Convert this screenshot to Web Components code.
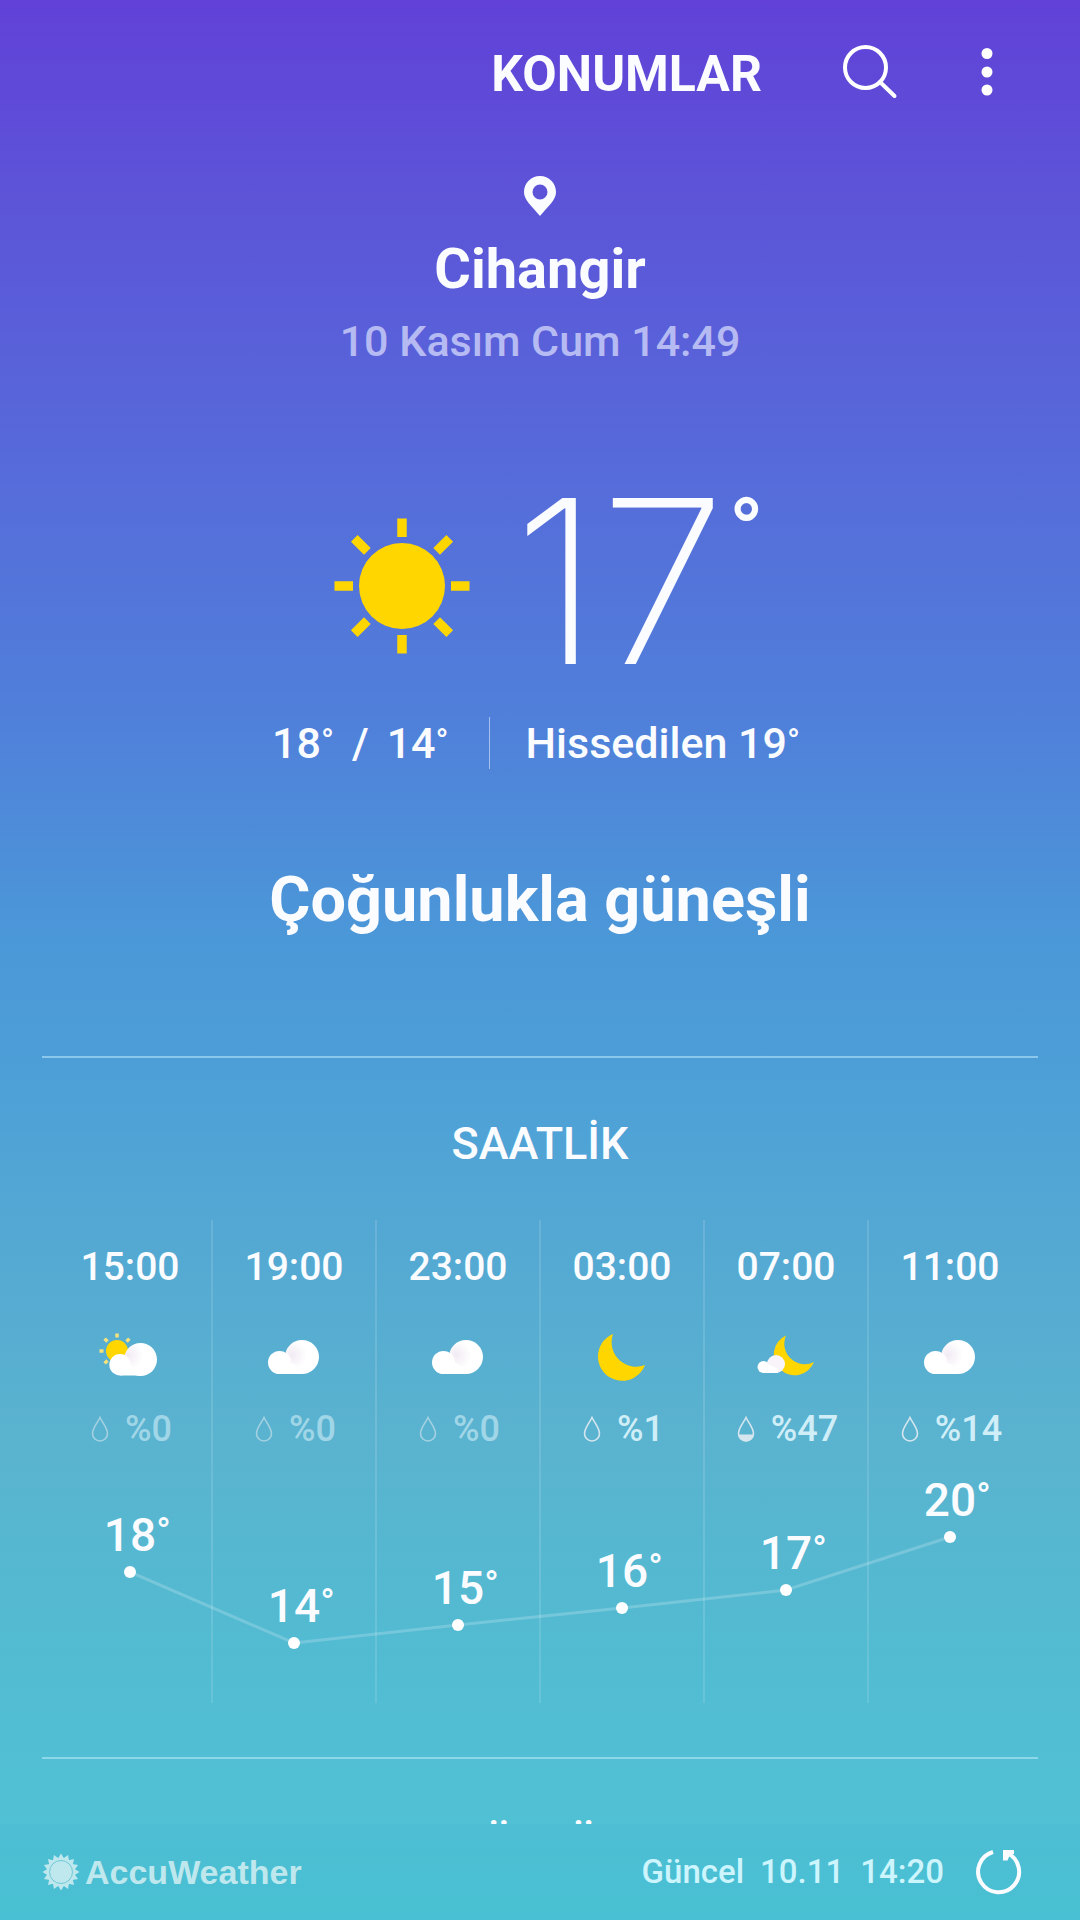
<!DOCTYPE html>
<html lang="tr">
<head>
<meta charset="utf-8">
<meta name="viewport" content="width=device-width, initial-scale=1">
<title>Hava Durumu</title>
<style>
  body {
    margin: 0;
    font-family: Roboto, "Noto Sans", sans-serif;
    font-weight: 500;
    color: #fafcff;
  }
</style>
</head>
<body>
<weather-app>
  <weather-header slot="header"></weather-header>
  <current-weather
    city="Cihangir"
    date="10 Kasım Cum 14:49"
    temp="17"
    high="18"
    low="14"
    feels="19"
    condition="Çoğunlukla güneşli"></current-weather>
  <forecast-section heading="SAATLİK">
    <hourly-forecast>
      <hour-item time="15:00" icon="partly" rain="0" temp="18"></hour-item>
      <hour-item time="19:00" icon="cloud" rain="0" temp="14"></hour-item>
      <hour-item time="23:00" icon="cloud" rain="0" temp="15"></hour-item>
      <hour-item time="03:00" icon="moon" rain="1" temp="16"></hour-item>
      <hour-item time="07:00" icon="moon-cloud" rain="47" temp="17"></hour-item>
      <hour-item time="11:00" icon="cloud" rain="14" temp="20"></hour-item>
    </hourly-forecast>
  </forecast-section>
  <forecast-section heading="GÜNLÜK"></forecast-section>
  <weather-footer slot="footer" date="10.11" time="14:20"></weather-footer>
</weather-app>

<script>
const MAX_TEMP = 20;
const DOT_TOP = 87;

// vertical distance of a temperature from the top of the chart
const drop = (temp) => Math.round(((MAX_TEMP - temp) * 53) / 3);

const rays = (count, x, inner, outer) =>
  Array.from({ length: count }, (_, i) =>
    `<path d="M${x} ${inner}V${outer}" transform="rotate(${(i * 360) / count})" />`
  ).join("");

const cloudFill = `
  <defs>
    <radialGradient id="shade" gradientUnits="userSpaceOnUse" cx="30" cy="30" r="15">
      <stop offset="0" stop-color="#f1ebf4" />
      <stop offset="1" stop-color="#fff" />
    </radialGradient>
  </defs>`;

const ICONS = {
  cloud: `${cloudFill}
    <circle cx="40" cy="32" r="17" fill="url(#shade)" />
    <path fill="#fff" d="M17.500 38H30L40 44V49H17.500z" />
    <circle cx="17.500" cy="37.500" r="11.500" fill="#fff" />`,
  partly: `${cloudFill}
    <g transform="translate(19 26)" stroke="#f5e27a" stroke-width="3.500">${rays(8, 0, -13.5, -17.5)}</g>
    <circle cx="19" cy="26" r="11" fill="#ffd600" />
    <circle cx="42.500" cy="34.500" r="16.500" fill="url(#shade)" />
    <path fill="#fff" d="M22 40H32L43 46V50.500H22z" />
    <circle cx="22" cy="39.800" r="10.700" fill="#fff" />`,
  moon: `<path fill="#ffd600" d="M23 9A24.300 24.300 0 1 0 55 40A24.500 24.500 0 0 1 23 9z" />`,
  "moon-cloud": `
    <path fill="#ffd600" d="M32 10.500A20.800 20.800 0 1 0 60 37A20.500 20.500 0 0 1 32 10.500z" />
    <circle cx="22" cy="39" r="9" fill="#f8f4fa" />
    <path fill="#fff" d="M9 40H16L24 44V48H9z" />
    <circle cx="9.500" cy="42" r="6" fill="#fff" />`,
};

// raised degree sign, smaller than the digits beside it
const degree = `<span class="degree">°</span>`;

class WeatherApp extends HTMLElement {
  constructor() {
    super();
    const shadow = this.attachShadow({ mode: "open" });

    shadow.innerHTML = `
      <style>
        :host {
          display: flex;
          flex-direction: column;
          height: 100vh;
          background: linear-gradient(
            #6141d8 0%,
            #5c55d8 11%,
            #566cda 25%,
            #507fda 37%,
            #4b98d8 49%,
            #4d9fd7 56%,
            #52a6d4 62%,
            #5ab3cf 75%,
            #52bbd2 86%,
            #51c0d4 94%,
            #4cc3d4 100%
          );
        }

        main {
          flex: 1;
          min-height: 0;
          overflow: hidden;
          padding: 0 42px;
        }
      </style>

      <slot name="header"></slot>
      <main><slot></slot></main>
      <slot name="footer"></slot>
    `;
  }
}

class WeatherHeader extends HTMLElement {
  constructor() {
    super();
    const shadow = this.attachShadow({ mode: "open" });

    shadow.innerHTML = `
      <style>
        :host {
          display: block;
        }

        header {
          display: flex;
          align-items: flex-start;
          justify-content: flex-end;
          padding: 44px 65px 40px 42px;
        }

        button {
          display: flex;
          padding: 0;
          border: none;
          background: none;
          color: inherit;
          font: 700 50px/60px Roboto, sans-serif;
          cursor: pointer;
        }

        .search {
          margin: 0 61px 0 80px;
        }

        svg {
          display: block;
        }
      </style>

      <header>
        <button type="button">KONUMLAR</button>
        <button type="button" class="search" aria-label="Ara">
          <svg width="56" height="56" viewBox="0 0 56 56" fill="none" stroke="#fff" stroke-width="4" stroke-linecap="round">
            <circle cx="23.500" cy="23.500" r="20.500" />
            <path d="M38 38L52.500 52" />
          </svg>
        </button>
        <button type="button" aria-label="Diğer seçenekler">
          <svg width="56" height="56" viewBox="0 0 56 56" fill="#fff">
            <circle cx="28" cy="9.500" r="5.500" />
            <circle cx="28" cy="28" r="5.500" />
            <circle cx="28" cy="46" r="5.500" />
          </svg>
        </button>
      </header>
    `;
  }
}

class CurrentWeather extends HTMLElement {
  constructor() {
    super();
    const shadow = this.attachShadow({ mode: "open" });
    const get = (name) => this.getAttribute(name) || "";

    shadow.innerHTML = `
      <style>
        :host {
          display: flex;
          flex-direction: column;
          align-items: center;
          padding: 32px 0 120px;
        }

        svg {
          display: block;
        }

        h1, h2, p {
          margin: 0;
        }

        h1 {
          margin-top: 21px;
          font-size: 56px;
          line-height: 64px;
          font-weight: 700;
        }

        .date {
          margin-top: 14px;
          font-size: 43px;
          line-height: 52px;
          color: rgba(225, 228, 255, 0.7);
        }

        .now {
          display: flex;
          align-items: center;
          gap: 43px;
          margin-top: 135px;
          padding-left: 18px;
        }

        .temp {
          display: flex;
          align-items: flex-start;
          gap: 3px;
          padding-bottom: 10px;
          font-family: Inter, Roboto, sans-serif;
          font-size: 228px;
          line-height: 158px;
          font-weight: 200;
        }

        .temp .degree {
          font-family: Roboto, sans-serif;
          font-size: 92px;
          line-height: 62px;
          font-weight: 500;
        }

        .details {
          display: flex;
          margin-top: 47px;
          font-size: 43px;
          line-height: 52px;
        }

        .details .degree {
          font-size: 34px;
          line-height: 34px;
          vertical-align: 6px;
        }

        .range {
          display: flex;
          gap: 18px;
          padding-right: 40px;
          border-right: 1px solid rgba(255, 255, 255, 0.5);
        }

        .feels {
          padding: 0 8px 0 36px;
        }

        h2 {
          margin-top: 95px;
          font-size: 63px;
          line-height: 72px;
          font-weight: 700;
        }
      </style>

      <svg width="32" height="40" viewBox="0 0 32 40" fill="#fafcff" aria-hidden="true">
        <path fill-rule="evenodd" d="M16 0C7 0 0 7 0 16c0 8 7 13 16 24 9-11 16-16 16-24C32 7 25 0 16 0zm0 8.500a7.500 7.500 0 1 1 0 15 7.500 7.500 0 0 1 0-15z" />
      </svg>
      <h1>${get("city")}</h1>
      <p class="date">${get("date")}</p>
      <div class="now">
        <svg width="136" height="136" viewBox="-68 -68 136 136" aria-hidden="true">
          <circle r="43" fill="#ffd600" />
          <g stroke="#ffd600" stroke-width="9.500">${rays(8, 0, -49, -67.5)}</g>
        </svg>
        <div class="temp">${get("temp")}${degree}</div>
      </div>
      <div class="details">
        <div class="range"><span>${get("high")}${degree}</span><span>/</span><span>${get("low")}${degree}</span></div>
        <div class="feels">Hissedilen ${get("feels")}${degree}</div>
      </div>
      <h2>${get("condition")}</h2>
    `;
  }
}

class ForecastSection extends HTMLElement {
  constructor() {
    super();
    const shadow = this.attachShadow({ mode: "open" });

    shadow.innerHTML = `
      <style>
        :host {
          display: block;
          padding: 60px 0 54px;
          border-top: 2px solid rgba(200, 240, 255, 0.5);
        }

        h3 {
          margin: 0 0 50px;
          font-size: 45px;
          line-height: 52px;
          font-weight: 500;
          text-align: center;
        }
      </style>

      <h3>${this.getAttribute("heading") || ""}</h3>
      <slot></slot>
    `;
  }
}

class HourlyForecast extends HTMLElement {
  constructor() {
    super();
    const shadow = this.attachShadow({ mode: "open" });
    const temps = [...this.querySelectorAll("hour-item")].map((item) => Number(item.getAttribute("temp")));
    const points = temps.map((temp, i) => `${i * 2 + 1},${DOT_TOP + drop(temp)}`).join(" ");

    shadow.innerHTML = `
      <style>
        :host {
          display: grid;
          grid-template-columns: repeat(6, 1fr);
          position: relative;
          padding: 0 5px 0 7px;
        }

        /* the line runs behind the points of all the columns */
        svg {
          position: absolute;
          left: 6px;
          bottom: 0;
          width: calc(100% - 12px);
          height: 253px;
        }
      </style>

      <svg viewBox="0 0 ${temps.length * 2} 253" preserveAspectRatio="none" aria-hidden="true">
        <polyline points="${points}" fill="none" stroke="#fff" stroke-opacity="0.2" stroke-width="3" vector-effect="non-scaling-stroke" />
      </svg>
      <slot></slot>
    `;
  }
}

class HourItem extends HTMLElement {
  constructor() {
    super();
    const shadow = this.attachShadow({ mode: "open" });
    const rain = Number(this.getAttribute("rain"));
    const temp = Number(this.getAttribute("temp"));

    shadow.innerHTML = `
      <style>
        :host {
          display: flex;
          flex-direction: column;
          align-items: center;
          position: relative;
          padding-top: 23px;
          box-sizing: border-box;
          border-right: 2px solid rgba(255, 255, 255, 0.13);
        }

        :host(:last-of-type) {
          border-right-color: transparent;
        }

        svg {
          display: block;
        }

        time {
          font-size: 39px;
          line-height: 48px;
        }

        .icon {
          margin: 34px 0 19px;
        }

        .rain {
          display: flex;
          align-items: center;
          gap: 16px;
          padding-left: 3px;
          font-size: 36px;
          line-height: 42px;
          color: #cfeef8;
        }

        .rain.dry {
          opacity: 0.6;
        }

        .chart {
          display: flex;
          flex-direction: column;
          align-items: center;
          height: 253px;
          padding-top: ${24 + drop(temp)}px;
          box-sizing: border-box;
        }

        .temp {
          position: relative;
          font-size: 46px;
          line-height: 52px;
        }

        /* the degree sign hangs outside, so the digits stay centred on the point */
        .temp .degree {
          position: absolute;
          left: 100%;
          font-size: 38px;
          line-height: 47px;
        }

        .dot {
          width: 12px;
          height: 12px;
          margin-top: 5px;
          border-radius: 50%;
          background: #fff;
        }
      </style>

      <time>${this.getAttribute("time")}</time>
      <svg class="icon" width="64" height="64" viewBox="0 0 64 64" aria-hidden="true">${ICONS[this.getAttribute("icon")]}</svg>
      <div class="rain ${rain ? "" : "dry"}">
        <svg width="18" height="26" viewBox="0 0 18 26" fill="none" stroke="#d5e6ee" stroke-width="1.600" aria-hidden="true">
          <path d="M9 1.500C7 6 1.500 12 1.500 17.500a7.500 7.500 0 0 0 15 0C16.500 12 11 6 9 1.500z" />
          ${rain > 20 ? `<path fill="#d5e6ee" stroke="none" d="M1.500 18.500h15a7.500 7 0 0 1-15 0z" />` : ""}
        </svg>
        <span>%${rain}</span>
      </div>
      <div class="chart">
        <div class="temp">${temp}${degree}</div>
        <div class="dot"></div>
      </div>
    `;
  }
}

class WeatherFooter extends HTMLElement {
  constructor() {
    super();
    const shadow = this.attachShadow({ mode: "open" });

    shadow.innerHTML = `
      <style>
        :host {
          display: block;
        }

        footer {
          display: flex;
          align-items: center;
          height: 96px;
          padding: 0 56px 0 42px;
          background: rgba(60, 175, 205, 0.15);
        }

        svg {
          display: block;
        }

        a {
          display: flex;
          align-items: center;
          gap: 5px;
          margin-right: auto;
          color: #bfe8ee;
          font: 700 34px/40px "Liberation Sans", sans-serif;
          text-decoration: none;
        }

        .updated {
          display: flex;
          gap: 16px;
          font-size: 33px;
          line-height: 40px;
          color: #cdf5fd;
        }

        button {
          margin-left: 28px;
          padding: 0;
          border: none;
          background: none;
          cursor: pointer;
        }
      </style>

      <footer>
        <a href="#">
          <svg width="38" height="38" viewBox="-19 -19 38 38" fill="#bfe8ee" aria-hidden="true">
            ${Array.from({ length: 16 }, (_, i) => `<path d="M-4 -12L0 -18.500L4 -12z" transform="rotate(${i * 22.5})" />`).join("")}
            <circle r="14" />
            <circle r="11.500" fill="none" stroke="#6fc9d6" stroke-width="1" />
          </svg>
          AccuWeather
        </a>
        <div class="updated"><span>Güncel</span><span>${this.getAttribute("date")}</span><span>${this.getAttribute("time")}</span></div>
        <button type="button" aria-label="Yenile">
          <svg width="52" height="52" viewBox="0 0 52 52" fill="none" stroke="#fafcff" stroke-width="4">
            <path d="M21 6A20.500 20.500 0 1 0 35 7" />
            <path fill="#fafcff" stroke="none" d="M31 4H42V8L38 8.500L35.500 14.500H31z" />
          </svg>
        </button>
      </footer>
    `;
  }
}

customElements.define("weather-app", WeatherApp);
customElements.define("weather-header", WeatherHeader);
customElements.define("current-weather", CurrentWeather);
customElements.define("forecast-section", ForecastSection);
customElements.define("hourly-forecast", HourlyForecast);
customElements.define("hour-item", HourItem);
customElements.define("weather-footer", WeatherFooter);
</script>
</body>
</html>
